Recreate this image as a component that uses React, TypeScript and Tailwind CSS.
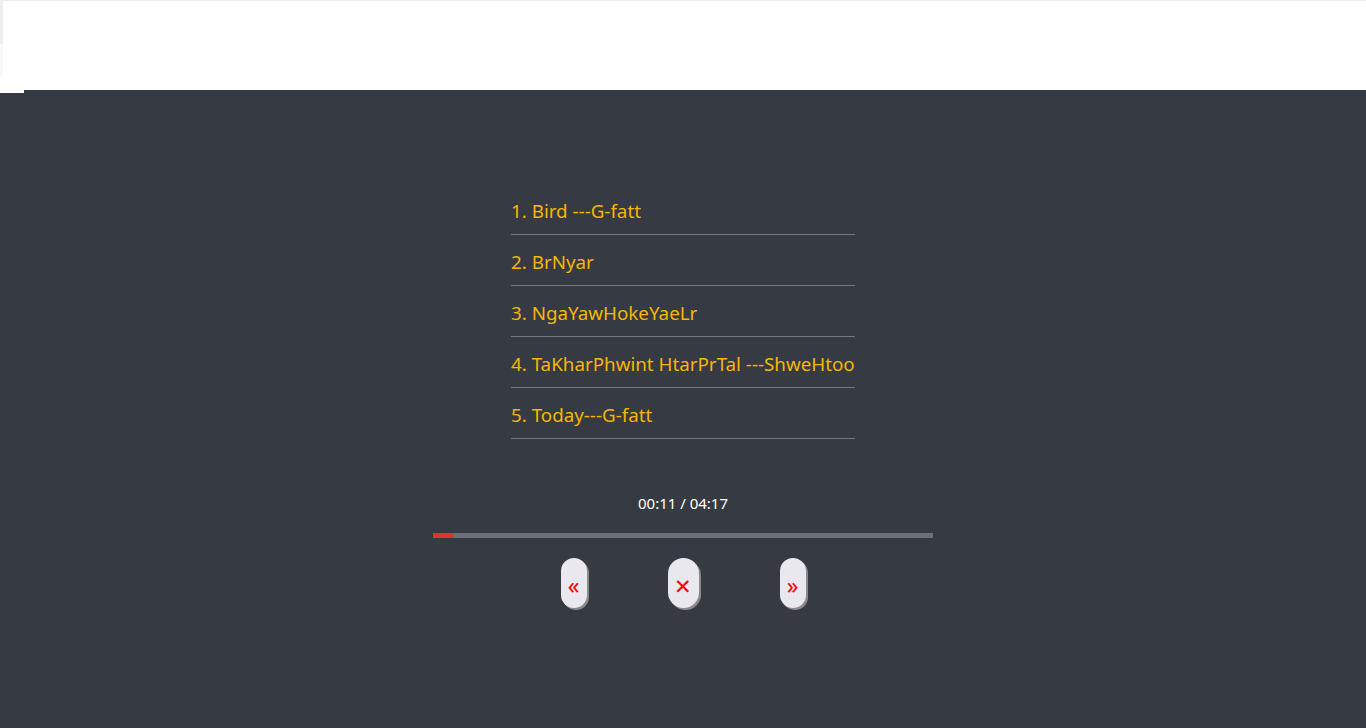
import React from 'react';

const songs = [
  'Bird ---G-fatt',
  'BrNyar',
  'NgaYawHokeYaeLr',
  'TaKharPhwint HtarPrTal ---ShweHtoo',
  'Today---G-fatt',
];

export default function App() {
  const current = 11;
  const total = 257;
  const pct = (current / total) * 100;

  return (
    <div className="min-h-screen flex flex-col bg-[#363a43] font-['Noto_Sans','Open_Sans',sans-serif]">
      {/* Top blank header */}
      <div className="relative h-[90px] bg-white border-t border-[#ececec]">
        <div className="absolute left-0 top-0 w-[3px] h-[43px] bg-[#efefef]" />
        <div className="absolute left-0 top-[43px] w-[3px] h-[32px] bg-[#f8f8fa]" />
        <div className="absolute left-0 top-[89px] w-[24px] h-[3px] bg-white" />
      </div>

      {/* Player */}
      <div className="flex flex-col items-center pt-[94px]">
        <ul className="w-[344px]">
          {songs.map((s, i) => (
            <li
              key={i}
              className="h-[51px] flex items-center pt-[5px] border-b border-[#75787e] text-[#f7b600] text-[18.8px] whitespace-nowrap"
            >
              {i + 1}. {s}
            </li>
          ))}
        </ul>

        <div className="mt-[54px] h-[20px] leading-[20px] text-white text-[15px]">
          00:11 / 04:17
        </div>

        <div className="mt-[20px] w-[500px] h-[5px] bg-[#6c7079]">
          <div className="h-full bg-[#d93535]" style={{ width: `${pct}%` }} />
        </div>

        <div className="mt-[20px] flex items-start gap-[81px]">
          <button className="w-[26px] h-[50px] rounded-full bg-[#e9e8ee] shadow-[2px_2px_0_#8a8a8a] text-[#ff0000] text-[23px] leading-none pt-[5px]">
            «
          </button>
          <button className="w-[31px] h-[50px] rounded-full bg-[#e9e8ee] shadow-[2px_2px_0_#8a8a8a] text-[#ff0000] text-[21px] leading-none pt-[6px]">
            ✕
          </button>
          <button className="w-[26px] h-[50px] rounded-full bg-[#e9e8ee] shadow-[2px_2px_0_#8a8a8a] text-[#ff0000] text-[23px] leading-none pt-[5px]">
            »
          </button>
        </div>
      </div>
    </div>
  );
}
